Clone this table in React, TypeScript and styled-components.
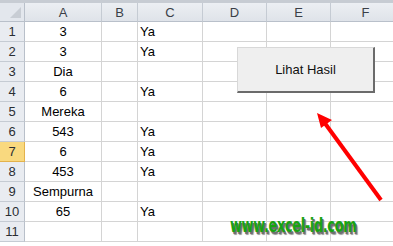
import { Fragment } from "react";
import styled, { createGlobalStyle } from "styled-components";

const GlobalStyle = createGlobalStyle`
    html, body {
        margin: 0;
        padding: 0;
        background: #fff;
    }
    body {
        font-family: "Liberation Sans", Arial, sans-serif;
    }
`;

const COLS = ["A", "B", "C", "D", "E", "F"];
const WIDTHS = [77, 36, 65, 64, 64, 70];

const rows: { a: string; c: string }[] = [
    { a: "3", c: "Ya" },
    { a: "3", c: "Ya" },
    { a: "Dia", c: "" },
    { a: "6", c: "Ya" },
    { a: "Mereka", c: "" },
    { a: "543", c: "Ya" },
    { a: "6", c: "Ya" },
    { a: "453", c: "Ya" },
    { a: "Sempurna", c: "" },
    { a: "65", c: "Ya" },
    { a: "", c: "" },
];

const Sheet = styled.div`
    position: relative;
    width: 393px;
    height: 246px;
    overflow: hidden;
    border-top: 3px solid #c7ccd3;
    box-sizing: border-box;
`;

const Grid = styled.div`
    display: grid;
    grid-template-columns: 25px ${WIDTHS.map((w) => `${w}px`).join(" ")};
    grid-template-rows: 19px repeat(11, 20px);
`;

const Corner = styled.div`
    position: relative;
    background: #e3e7ed;
    border-right: 1px solid #b9c0ca;
    border-bottom: 1px solid #b9c0ca;
    box-sizing: border-box;

    &::after {
        content: "";
        position: absolute;
        right: 3px;
        bottom: 3px;
        width: 0;
        height: 0;
        border-left: 11px solid transparent;
        border-bottom: 11px solid #c8cdd4;
    }
`;

const ColHead = styled.div`
    background: linear-gradient(#eceff3, #dfe3e9);
    border-right: 1px solid #c5cbd3;
    border-bottom: 1px solid #b9c0ca;
    box-sizing: border-box;
    display: flex;
    align-items: center;
    justify-content: center;
    font-size: 13px;
    color: #3a3f47;
`;

const RowHead = styled.div<{ $active?: boolean }>`
    background: ${(p) => (p.$active ? "#f9d97f" : "#e9ecf1")};
    border-right: 1px solid ${(p) => (p.$active ? "#e3b24c" : "#b9c0ca")};
    border-bottom: 1px solid ${(p) => (p.$active ? "#e3b24c" : "#c5cbd3")};
    box-sizing: border-box;
    display: flex;
    align-items: center;
    justify-content: center;
    font-size: 13px;
    color: #2a2e33;
`;

const Cell = styled.div<{ $align?: "center" | "left" }>`
    border-right: 1px solid #d4d4d4;
    border-bottom: 1px solid #d4d4d4;
    box-sizing: border-box;
    display: flex;
    align-items: center;
    justify-content: ${(p) => (p.$align === "center" ? "center" : "flex-start")};
    padding-left: ${(p) => (p.$align === "center" ? "0" : "2px")};
    font-size: 13px;
    color: #000;
    white-space: nowrap;
`;

const Button = styled.div`
    position: absolute;
    left: 237px;
    top: 44px;
    width: 138px;
    height: 46px;
    box-sizing: border-box;
    background: #efefef;
    border-top: 1px solid #d8d8d8;
    border-left: 1px solid #d8d8d8;
    border-right: 2px solid #6b6b6b;
    border-bottom: 2px solid #6b6b6b;
    display: flex;
    align-items: center;
    justify-content: center;
    font-size: 13px;
    color: #111;
`;

const Arrow = styled.svg`
    position: absolute;
    left: 300px;
    top: 97px;
`;

const Logo = styled.div`
    position: absolute;
    left: 230px;
    top: 211px;
    font-family: "DejaVu Sans", sans-serif;
    font-weight: 700;
    font-size: 19px;
    line-height: 22px;
    letter-spacing: -0.5px;
    white-space: nowrap;
    color: #17a312;
    text-shadow: 2px 2px 0 #6f6f6f, 3px 3px 1px #999;
    transform: scaleX(0.68);
    transform-origin: left top;
`;

const App = () => {
    return (
        <>
            <GlobalStyle />
            <Sheet>
                <Grid>
                    <Corner />
                    {COLS.map((c) => (
                        <ColHead key={c}>{c}</ColHead>
                    ))}
                    {rows.map((r, i) => (
                        <Fragment key={i}>
                            <RowHead $active={i === 6}>{i + 1}</RowHead>
                            <Cell $align="center">{r.a}</Cell>
                            <Cell />
                            <Cell>{r.c}</Cell>
                            <Cell />
                            <Cell />
                            <Cell />
                        </Fragment>
                    ))}
                </Grid>
                <Button>Lihat Hasil</Button>
                <Arrow width="93" height="110" viewBox="0 0 93 110">
                    <line x1="81" y1="100" x2="24" y2="22" stroke="#f00" strokeWidth="4" />
                    <polygon points="17,13 32,20 21,28" fill="#f00" />
                </Arrow>
                <Logo>www.excel-id.com</Logo>
            </Sheet>
        </>
    );
};

export default App;
